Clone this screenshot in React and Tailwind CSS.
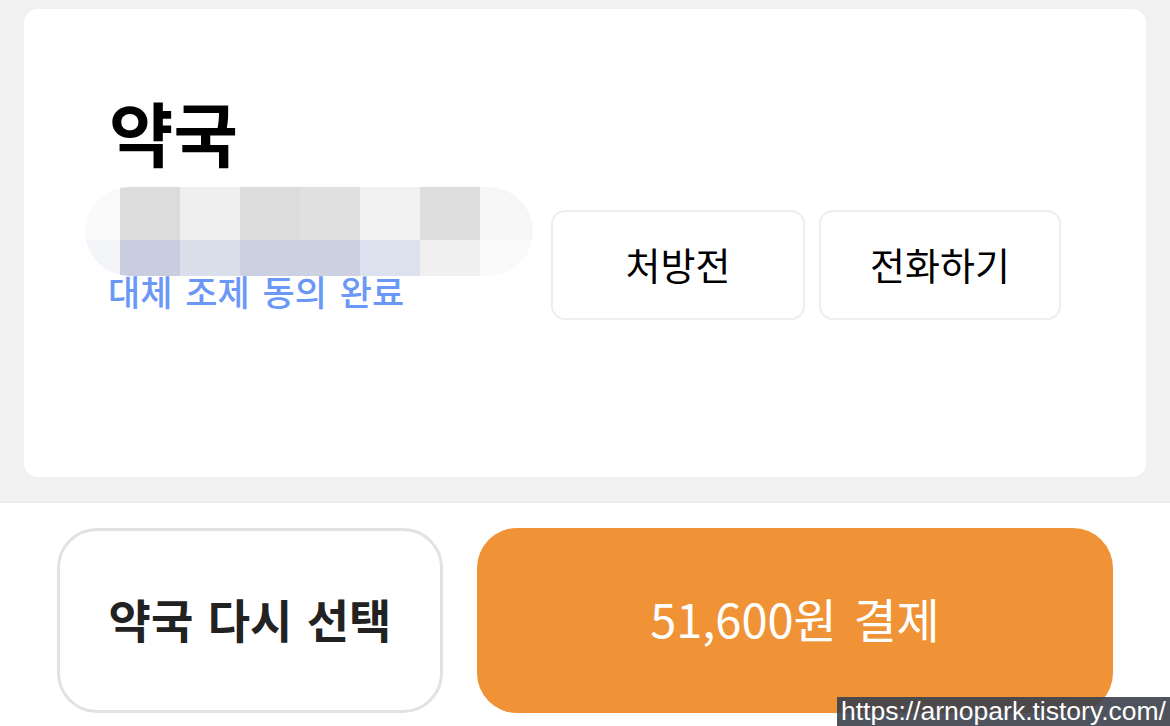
const font = { fontFamily: '"Noto Sans CJK KR", "Noto Sans", sans-serif' }

const blurTop = ['#fafafa', '#dcdcdc', '#efefef', '#dcdcdc', '#e0e0e0', '#f1f1f1', '#dedede', '#f6f6f6']
const blurBottom = ['#f3f5f9', '#c8cee0', '#dadfeb', '#cbd1e0', '#ccd2e1', '#dde1ee', '#f0f0f0', '#fafafa']
const blurWidths = ['w-[35px]', 'w-[60px]', 'w-[60px]', 'w-[60px]', 'w-[60px]', 'w-[60px]', 'w-[60px]', 'w-[53px]']

function Pixelated() {
  return (
    <div className="w-[448px] h-[89px] flex flex-col overflow-hidden rounded-[45px]">
      <div className="flex h-[53px]">
        {blurTop.map((c, i) => (
          <div key={i} className={blurWidths[i]} style={{ background: c }} />
        ))}
      </div>
      <div className="flex h-[36px]">
        {blurBottom.map((c, i) => (
          <div key={i} className={blurWidths[i]} style={{ background: c }} />
        ))}
      </div>
    </div>
  )
}

export default function App() {
  return (
    <div className="w-[1170px] h-[726px] flex flex-col bg-white relative overflow-hidden" style={font}>
      <div className="h-[502px] bg-[#f1f1f1] pt-[9px] px-[24px]">
        <div className="h-[468px] bg-white rounded-[14px] flex items-start pl-[61px] pr-[85px]">
          <div className="flex flex-col w-[466px] pt-[88px]">
            <h1 className="pl-[24px] text-[70px] leading-none font-bold text-black">약국</h1>
            <div className="mt-[20px]">
              <Pixelated />
            </div>
            <p className="-mt-[3px] pl-[23px] text-[35px] leading-none font-medium text-[#6b97f7] [word-spacing:5px]">대체 조제 동의 완료</p>
          </div>
          <div className="flex gap-[14px] mt-[201px] ml-auto">
            <button type="button" className="w-[254px] h-[110px] rounded-[14px] border-2 border-[#eeeeee] bg-white text-[38px] text-black pb-[4px]">
              처방전
            </button>
            <button type="button" className="w-[242px] h-[110px] rounded-[14px] border-2 border-[#eeeeee] bg-white text-[38px] text-black pb-[4px]">
              전화하기
            </button>
          </div>
        </div>
      </div>
      <div className="flex-1 border-t border-[#e8e8e8] flex gap-[34px] px-[57px] pt-[25px]">
        <button type="button" className="w-[386px] h-[185px] rounded-[40px] border-[3px] border-[#e2e2e2] bg-white text-[46px] font-bold text-[#222222] [word-spacing:4px] pb-[4px]">
          약국 다시 선택
        </button>
        <button type="button" className="flex-1 h-[185px] rounded-[40px] bg-[#f09336] text-[47px] font-normal text-white [word-spacing:6px] pb-[4px]">
          51,600원 결제
        </button>
      </div>
      <div className="absolute right-0 bottom-0 h-[29px] px-[4px] bg-[#3b404c]/90 text-white text-[26.5px] leading-[29px]" style={{ fontFamily: '"Liberation Sans", sans-serif' }}>
        https://arnopark.tistory.com/
      </div>
    </div>
  )
}
